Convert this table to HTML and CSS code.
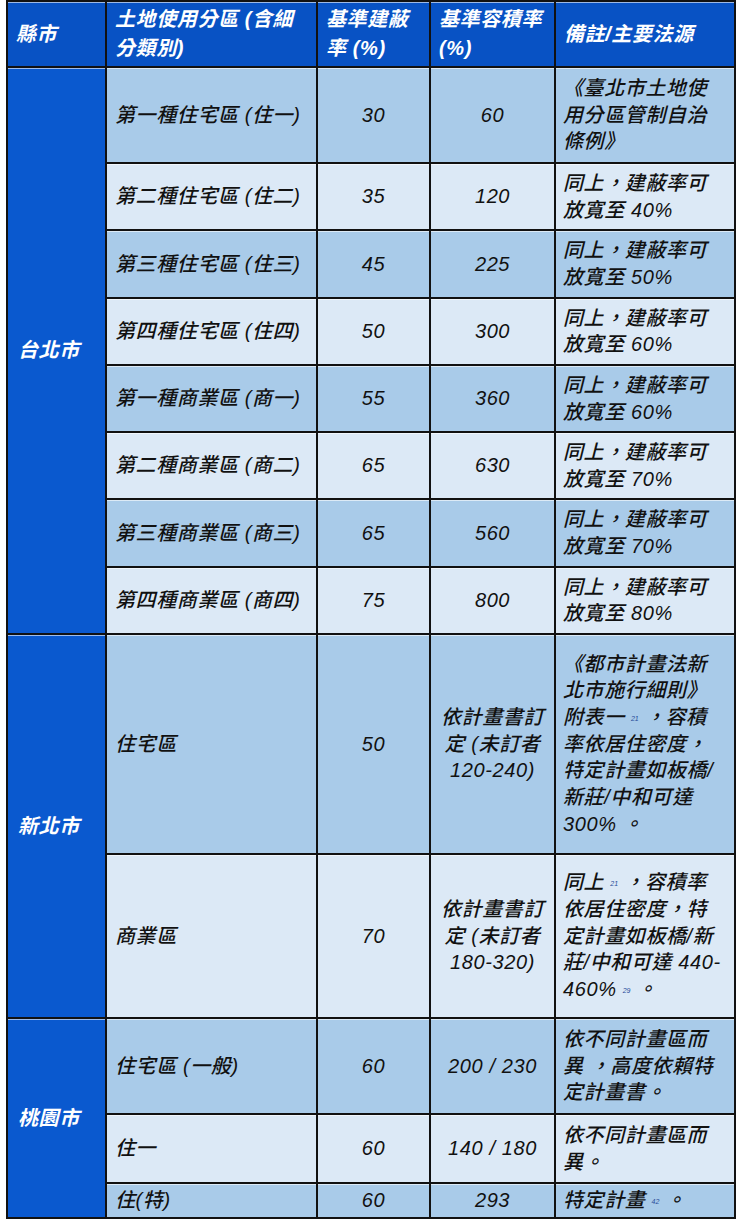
FILE: index.html
```html
<!DOCTYPE html>
<html lang="zh-Hant">
<head>
<meta charset="utf-8">
<title>北北桃土地使用分區建蔽率與容積率</title>
<link rel="stylesheet" href="styles.css">
</head>
<body>
<div class="page">
<table class="zoning">
  <colgroup>
    <col class="c-city">
    <col class="c-zone">
    <col class="c-bcr">
    <col class="c-far">
    <col class="c-note">
  </colgroup>
  <thead>
    <tr class="head">
      <th>縣市</th>
      <th>土地使用分區 (含細分類別)</th>
      <th>基準建蔽率 (%)</th>
      <th>基準容積率 (%)</th>
      <th>備註/主要法源</th>
    </tr>
  </thead>
  <tbody>
    <tr class="dark h96">
      <th class="city" rowspan="8">台北市</th>
      <td class="zone">第一種住宅區 (住一)</td>
      <td class="num">30</td>
      <td class="num">60</td>
      <td class="note">《臺北市土地使用分區管制自治條例》</td>
    </tr>
    <tr class="light h67">
      <td class="zone">第二種住宅區 (住二)</td>
      <td class="num">35</td>
      <td class="num">120</td>
      <td class="note">同上，建蔽率可放寬至 40%</td>
    </tr>
    <tr class="dark h67">
      <td class="zone">第三種住宅區 (住三)</td>
      <td class="num">45</td>
      <td class="num">225</td>
      <td class="note">同上，建蔽率可放寬至 50%</td>
    </tr>
    <tr class="light h67">
      <td class="zone">第四種住宅區 (住四)</td>
      <td class="num">50</td>
      <td class="num">300</td>
      <td class="note">同上，建蔽率可放寬至 60%</td>
    </tr>
    <tr class="dark h67">
      <td class="zone">第一種商業區 (商一)</td>
      <td class="num">55</td>
      <td class="num">360</td>
      <td class="note">同上，建蔽率可放寬至 60%</td>
    </tr>
    <tr class="light h67">
      <td class="zone">第二種商業區 (商二)</td>
      <td class="num">65</td>
      <td class="num">630</td>
      <td class="note">同上，建蔽率可放寬至 70%</td>
    </tr>
    <tr class="dark h67">
      <td class="zone">第三種商業區 (商三)</td>
      <td class="num">65</td>
      <td class="num">560</td>
      <td class="note">同上，建蔽率可放寬至 70%</td>
    </tr>
    <tr class="light h67">
      <td class="zone">第四種商業區 (商四)</td>
      <td class="num">75</td>
      <td class="num">800</td>
      <td class="note">同上，建蔽率可放寬至 80%</td>
    </tr>
    <tr class="dark h220">
      <th class="city" rowspan="2">新北市</th>
      <td class="zone">住宅區</td>
      <td class="num">50</td>
      <td class="num">依計畫書訂定 (未訂者 120-240)</td>
      <td class="note">《都市計畫法新北市施行細則》附表一 <sup>21</sup> ，容積率依居住密度，特定計畫如板橋/新莊/中和可達 300% 。</td>
    </tr>
    <tr class="light h164">
      <td class="zone">商業區</td>
      <td class="num">70</td>
      <td class="num">依計畫書訂定 (未訂者 180-320)</td>
      <td class="note">同上 <sup>21</sup> ，容積率依居住密度，特定計畫如板橋/新莊/中和可達 440-460% <sup>29</sup> 。</td>
    </tr>
    <tr class="dark h96">
      <th class="city" rowspan="3">桃園市</th>
      <td class="zone">住宅區 (一般)</td>
      <td class="num">60</td>
      <td class="num">200 / 230</td>
      <td class="note">依不同計畫區而異 ，高度依賴特定計畫書。</td>
    </tr>
    <tr class="light h69">
      <td class="zone">住一</td>
      <td class="num">60</td>
      <td class="num">140 / 180</td>
      <td class="note">依不同計畫區而異。</td>
    </tr>
    <tr class="dark h35">
      <td class="zone">住(特)</td>
      <td class="num">60</td>
      <td class="num">293</td>
      <td class="note">特定計畫 <sup>42</sup> 。</td>
    </tr>
  </tbody>
</table>
</div>
</body>
</html>
```

FILE: styles.css
```css
html, body {
  margin: 0;
  padding: 0;
  background: #ffffff;
}

body {
  font-family: "Liberation Sans", "Noto Sans CJK TC", sans-serif;
  color: #111111;
}

.page {
  padding: 0 6px;
}

.zoning {
  border-collapse: collapse;
  table-layout: fixed;
  width: 728px;
  font-size: 20px;
  font-style: italic;
  letter-spacing: 0.6px;
  line-height: 26.7px;
}

.c-city { width: 99px; }
.c-zone { width: 211px; }
.c-bcr  { width: 113px; }
.c-far  { width: 125px; }
.c-note { width: 180px; }

.zoning th,
.zoning td {
  border: 2px solid #111111;
  padding: 0 8px;
  vertical-align: middle;
  text-align: left;
  font-weight: 500;
  box-shadow: inset 0 1px 0 rgba(255, 255, 255, 0.6);
}

.zoning .head { height: 66px; }
.zoning .head th {
  background: #0852c4;
  color: #ffffff;
  font-weight: bold;
  line-height: 29px;
}

.zoning .city {
  background: #0a59cf;
  color: #ffffff;
  font-weight: bold;
  padding-left: 10px;
}

.zoning .dark td { background: #a9cbe9; }
.zoning .light td { background: #dce9f6; }

.zoning .num { text-align: center; }
.zoning .zone { padding-left: 8px; }
.zoning .note { padding: 0 10px 0 7px; }

.note sup {
  font-size: 7px;
  line-height: 7px;
  letter-spacing: 0;
  color: #2a4d9a;
  vertical-align: 3px;
}

.h96  { height: 96px; }
.h67  { height: 67.3px; }
.h220 { height: 220px; }
.h164 { height: 164px; }
.h69  { height: 69px; }
.h35  { height: 35px; }
```
